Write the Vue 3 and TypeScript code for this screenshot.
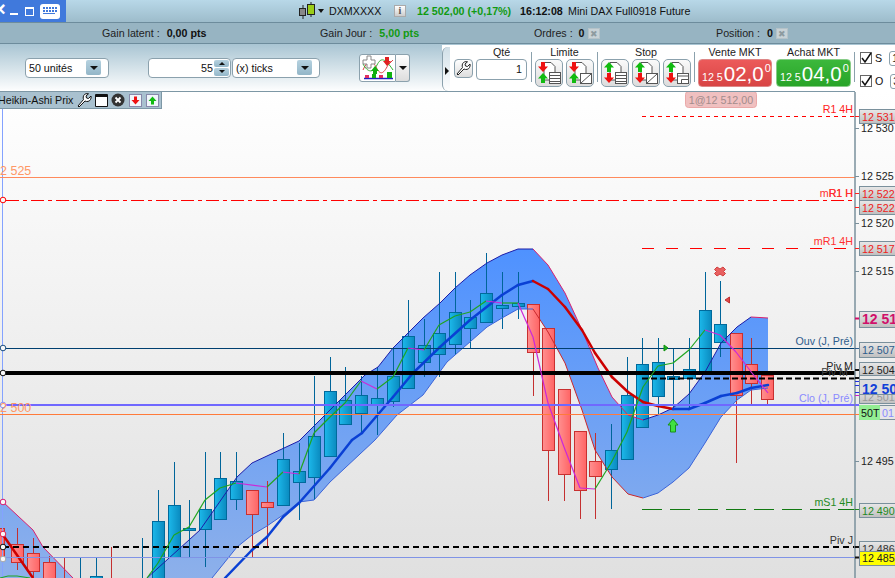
<script setup lang="ts">
type P = [number, number]
type C = { x: number; t: number; b: number; h: number; l: number; up: boolean }

const c = (x: number, t: number, b: number, h: number, l: number, up = true): C => ({ x, t, b, h, l, up })

const candles: C[] = [
  c(-2, 528, 559, 520, 565, false), c(17.5, 544, 562, 528, 570, false), c(33, 553, 571, 538, 578, false),
  c(49, 562, 590, 556, 600, false), c(64, 600, 610, 557, 620, false), c(80, 600, 610, 557, 620),
  c(96, 576, 600, 557, 620), c(111, 600, 610, 547, 620, false), c(142, 600, 610, 538, 620),
  c(158, 521, 600, 490, 620), c(174, 505, 557, 462, 557), c(189, 528, 530, 500, 557),
  c(205, 509, 529, 452, 567), c(220, 478, 519, 452, 519), c(236, 481, 499, 452, 510),
  c(252, 490, 514, 490, 557, false), c(267, 502, 507, 481, 547, false), c(283, 459, 505, 433, 505),
  c(299, 471, 482, 443, 520), c(314, 436, 477, 376, 500), c(330, 391, 456, 357, 456),
  c(345.5, 400, 424, 367, 425), c(361, 395, 413, 376, 434), c(377, 398, 404, 367, 435),
  c(393, 376, 401, 348, 407), c(408, 336, 388, 300, 388), c(424, 345, 362, 319, 377),
  c(439, 333, 354, 272, 377), c(455, 312, 344, 272, 355), c(470, 317, 328, 300, 348),
  c(486, 293, 322, 253, 322), c(502, 305, 308, 272, 329), c(518, 303, 306, 272, 319),
  c(533, 304, 352, 304, 396, false), c(548.5, 328, 450, 328, 501, false), c(564.5, 389, 474, 389, 501, false),
  c(580.5, 431, 490, 431, 519, false), c(595.5, 461, 476, 433, 519, false), c(611, 450, 469, 424, 509),
  c(627, 395, 459, 357, 459), c(642, 364, 427, 338, 427), c(658, 362, 396, 338, 414),
  c(673.5, 376, 379, 348, 410), c(689.5, 369, 378, 338, 410), c(705.5, 310, 374, 272, 374),
  c(720.5, 324, 342, 281, 357), c(736, 333, 395, 333, 463, false), c(751.5, 364, 383, 338, 404, false),
  c(767.5, 375, 399, 375, 404, false)
]

const upper: P[] = [[147, 578], [200, 530], [237, 477], [252, 463], [299, 441], [313, 427], [330, 410], [365, 375], [378, 367], [393, 348], [408, 333], [423, 318], [440, 303], [455, 288], [470, 275], [487, 263], [502, 255], [518, 249], [533, 249], [548, 265], [565, 293], [582, 330], [598, 368], [612, 397], [628, 415], [643, 420], [658, 415], [673, 408], [689, 394], [705, 372], [721, 343], [737, 327], [751, 317], [768, 318]]
const lower: P[] = [[212, 578], [237, 547], [252, 535], [267, 526], [283, 515], [299, 502], [314, 500], [330, 482], [375, 440], [397, 415], [423, 395], [447, 362], [487, 327], [502, 318], [518, 309], [533, 309], [548, 332], [565, 363], [582, 410], [595, 450], [612, 477], [628, 494], [643, 498], [658, 493], [673, 482], [689, 468], [705, 443], [721, 417], [737, 400], [751, 390], [768, 388]]
const mid: P[] = [[225, 578], [252, 550], [267, 537], [283, 517], [299, 503], [330, 468], [352, 440], [362, 433], [393, 397], [413, 373], [440, 347], [470, 320], [502, 295], [518, 285], [533, 281], [548, 289], [565, 307], [582, 330], [595, 353], [612, 377], [628, 392], [643, 402], [658, 406], [673, 409], [689, 409], [705, 403], [721, 396], [737, 393], [751, 388], [768, 385]]
const thin: P[] = [[147, 578], [158, 563], [174, 535], [189, 527], [205, 500], [220, 488], [236, 483], [267, 487], [283, 472], [299, 474], [314, 433], [330, 417], [345, 403], [361, 381], [377, 389], [393, 377], [408, 348], [424, 350], [439, 325], [455, 316], [470, 312], [486, 301], [502, 303], [518, 303], [533, 337], [548, 403], [564, 447], [580, 488], [595, 489], [611, 463], [627, 432], [643, 387], [658, 366], [673, 363], [689, 350], [705, 330], [720, 335], [736, 352], [752, 373], [768, 393]]
const leftUpper: P[] = [[3, 502], [33, 530], [43, 547], [73, 578]]
const leftThin: P[] = [[0, 578], [8, 576], [17, 576], [30, 578]]

const pts = (a: P[]) => a.map((p) => p.join(',')).join(' ')
const bandPath = pts([...upper, ...[...lower].reverse()])
const leftBand = pts([[0, 500], ...leftUpper, [0, 578]])

type Seg = { d: string; up: boolean }
const segs = (a: P[]): Seg[] => {
  const out: Seg[] = []
  for (let i = 1; i < a.length; i++) {
    out.push({ d: `M${a[i - 1][0]} ${a[i - 1][1]}L${a[i][0]} ${a[i][1]}`, up: a[i][1] <= a[i - 1][1] })
  }
  return out
}
const upperSegs = segs(upper)
const lowerSegs = segs(lower)
const midSegs = segs(mid)
const thinSegs = segs(thin)

const hLines = [
  { y: 116.5, x: 642, c: '#ff0000', w: 1, d: '4 4' },
  { y: 177.5, x: 0, c: '#ff8a5c', w: 1, d: '' },
  { y: 200.5, x: 6, c: '#ff0000', w: 1, d: '13 4 4 4' },
  { y: 248.5, x: 642, c: '#ff0000', w: 1, d: '12 12' },
  { y: 348.5, x: 0, c: '#003f70', w: 1, d: '' },
  { y: 373, x: 0, c: '#000000', w: 4, d: '' },
  { y: 378.5, x: 642, c: '#000000', w: 2, d: '6 3' },
  { y: 405, x: 0, c: '#7068ff', w: 2, d: '' },
  { y: 414.5, x: 0, c: '#ff7a3a', w: 1, d: '' },
  { y: 509.5, x: 642, c: '#127a12', w: 1, d: '20 8' },
  { y: 547, x: 3, c: '#000000', w: 2, d: '6 4' },
  { y: 557.5, x: 0, c: '#7f93e6', w: 1, d: '' }
]
const dots = [
  { y: 200, c: '#ff0000' }, { y: 348, c: '#1c4f80' }, { y: 373, c: '#111111' }, { y: 405, c: '#8c8cf0' },
  { y: 502, c: '#d81b70' }, { y: 534, c: '#e02050' }, { y: 547, c: '#111111' }, { y: 559, c: '#a8a8a8' }
]
const lineLabels = [
  { t: 'R1 4H', y: 113, c: '#ff2020' }, { t: 'mR1 H', y: 197, c: '#ff3030' }, { t: 'R1 H', y: 197, c: '#ff3030' },
  { t: 'mR1 4H', y: 245, c: '#ff3030' }, { t: 'Ouv (J, Pré)', y: 345, c: '#2e5c8c' }, { t: 'Piv M', y: 370, c: '#222222' },
  { t: 'Piv M', y: 376, c: '#444444', x: 848 }, { t: 'Clo (J, Pré)', y: 402, c: '#8a8aff' },
  { t: 'mS1 4H', y: 506, c: '#1f8a1f' }, { t: 'Piv J', y: 544, c: '#333333' }
]
const ticks = [
  { t: '12 530', y: 128 }, { t: '12 525', y: 176 }, { t: '12 520', y: 223 }, { t: '12 515', y: 271 }, { t: '12 495', y: 461 }
]
const boxes = [
  { t: '12 531', y: 109, h: 14, c: '#ee2020' }, { t: '12 522', y: 186, h: 14, c: '#ee2020' },
  { t: '12 522', y: 200, h: 14, c: '#ee2020' }, { t: '12 517', y: 241, h: 14, c: '#ee2020' },
  { t: '12 507', y: 342, h: 15, c: '#2e5c8c' }, { t: '12 504', y: 362, h: 14, c: '#222222' },
  { t: '12 501', y: 389, h: 14, c: '#999999' }, { t: '12 490', y: 503, h: 14, c: '#1f8a1f' },
  { t: '12 486', y: 541, h: 14, c: '#333333' }
]

const limits = [
  { first: 'down', shape: 'list' }, { first: 'down', shape: 'diag' }
]
const stops = [
  { first: 'up', shape: 'list' }, { first: 'up', shape: 'diag' }, { first: 'up', shape: 'win' }
]
const arrowUp = 'M5 0L10 5.500H7V10H3V5.500H0Z'
const arrowDown = 'M3 0H7V4.500H10L5 10L0 4.500H3Z'
</script>

<template>
  <div class="app">
    <header class="top">
      <div class="winbtns">
        <span class="wx">×</span>
        <span class="wmin"></span>
        <span class="wmax"></span>
        <span class="kbd"><i v-for="n in 10" :key="n"></i><b></b></span>
      </div>
      <svg class="candleico" width="20" height="18" viewBox="0 0 20 18">
        <path d="M5 3V17M13 0V15" stroke="#222" fill="none" />
        <rect x="1.500" y="6.500" width="6" height="7" fill="#888" stroke="#222" />
        <rect x="9.500" y="2.500" width="7" height="10" fill="#9acd18" stroke="#222" />
      </svg>
      <span class="caret topcaret"></span>
      <span class="sym">DXMXXXX</span>
      <span class="info">i</span>
      <span class="price">12 502,00 (+0,17%)</span>
      <span class="time">16:12:08</span>
      <span class="name">Mini DAX Full0918 Future</span>
    </header>

    <section class="stats">
      <div class="stat s1"><span>Gain latent :</span><b>0,00 pts</b></div>
      <div class="stat s2"><span>Gain Jour :</span><b class="green">5,00 pts</b></div>
      <div class="stat s3"><span>Ordres :</span><b>0</b><i class="xico">✖</i></div>
      <div class="stat s4"><span>Position :</span><b>0</b><i class="xico">✖</i></div>
    </section>

    <section class="tools">
      <div class="tleft">
        <div class="sel sel1"><span>50 unités</span><em><span class="caret"></span></em></div>
        <div class="numgroup">
          <div class="num">
            <span>55</span>
            <div class="spin"><em><span class="caret up"></span></em><em><span class="caret"></span></em></div>
          </div>
          <div class="sel sel2"><span>(x) ticks</span><em><span class="caret"></span></em></div>
        </div>
        <div class="stratbtn">
          <div class="strat">
            <svg width="34" height="25" viewBox="0 0 34 25">
              <path d="M2 15C7 4 11 4 15 12S22 20 27 10L32 5" stroke="#e04040" fill="none" />
              <path d="M2 9C7 18 12 18 16 10S24 3 32 15" stroke="#30b030" fill="none" />
              <path d="M3 23.500H32" stroke="#2020c0" stroke-width="1.500" />
              <path d="M4 20H8V23H4ZM18 20H22V23H18Z" fill="#e03060" />
              <path d="M11 19H15V23H11ZM26 17H31V23H26Z" fill="#10b010" />
              <path d="M2 5H6V1H10V5H14V9H10V13H6V9H2Z" fill="#fff" stroke="#888" />
              <path d="M14 11L18 16H16V19H12V16H10Z" fill="#10b010" />
              <path d="M24 2H28V6H30L26 11L22 6H24Z" fill="#e02020" />
            </svg>
          </div>
          <div class="stratdrop"><span class="caret"></span></div>
        </div>
      </div>

      <div class="panel">
        <span class="handle"><span class="harrow"></span></span>
        <div class="grp">
          <label class="qlabel">Qté</label>
          <div class="qrow">
            <span class="wrench">
              <svg width="15" height="15" viewBox="0 0 15 15"><path d="M1 13L2 14L8 8C10 9 12.500 8.500 13.500 6.500S14 3 14 3L11.500 5.500L9.500 5L9 3L11.500 .8S9 .2 7.500 1.500S6 5 6.500 6.500Z" fill="#fff" stroke="#222" /></svg>
            </span>
            <span class="qty">1</span>
          </div>
        </div>
        <span class="sep first"></span>
        <div class="grp">
          <label>Limite</label>
          <div class="btns">
            <button v-for="b in limits" :key="b.shape" class="tbtn">
              <svg width="26" height="26" viewBox="0 0 26 26">
                <path d="M8 2.500H15L19 6.500V20H8Z" fill="#fff" stroke="#555" />
                <path :d="arrowDown" fill="#ee1111" transform="translate(2 2)" />
                <path :d="arrowUp" fill="#11bb11" transform="translate(2 13)" />
                <g v-if="b.shape === 'list'"><rect x="13.500" y="12.500" width="11" height="11" fill="#fff" stroke="#555" /><path d="M14 15.500H24M14 18.500H24M14 21.500H24" stroke="#555" /></g>
                <g v-else><rect x="13.500" y="13.500" width="11" height="10" fill="#fff" stroke="#555" /><path d="M14 23L24 14" stroke="#555" /></g>
              </svg>
            </button>
          </div>
        </div>
        <span class="sep"></span>
        <div class="grp">
          <label>Stop</label>
          <div class="btns">
            <button v-for="b in stops" :key="b.shape" class="tbtn">
              <svg width="26" height="26" viewBox="0 0 26 26">
                <path d="M8 2.500H15L19 6.500V20H8Z" fill="#fff" stroke="#555" />
                <path :d="arrowUp" fill="#11bb11" transform="translate(2 2)" />
                <path :d="arrowDown" fill="#ee1111" transform="translate(2 13)" />
                <g v-if="b.shape === 'list'"><rect x="13.500" y="12.500" width="11" height="11" fill="#fff" stroke="#555" /><path d="M14 15.500H24M14 18.500H24M14 21.500H24" stroke="#555" /></g>
                <g v-else-if="b.shape === 'diag'"><rect x="13.500" y="13.500" width="11" height="10" fill="#fff" stroke="#555" /><path d="M14 23L24 14" stroke="#555" /></g>
                <g v-else><rect x="13.500" y="13.500" width="11" height="10" fill="#fff" stroke="#555" /><path d="M14 16H24M17.500 23.500V19.500H24" stroke="#555" fill="none" /></g>
              </svg>
            </button>
          </div>
        </div>
        <span class="sep"></span>
        <div class="grp">
          <label>Vente MKT</label>
          <div class="mkt sell"><small>12 5</small><strong>02,0</strong><sup>0</sup></div>
        </div>
        <div class="grp achat">
          <label>Achat MKT</label>
          <div class="mkt buy"><small>12 5</small><strong>04,0</strong><sup>0</sup></div>
        </div>
        <span class="sep last"></span>
        <div class="checks">
          <div class="chk"><span class="box"><svg width="12" height="12" viewBox="0 0 12 12"><path d="M2 6L5 10L11 1" fill="none" stroke="#111" stroke-width="1.500" /></svg></span><span>S</span><span class="stub">1</span></div>
          <div class="chk"><span class="box"><svg width="12" height="12" viewBox="0 0 12 12"><path d="M2 6L5 10L11 1" fill="none" stroke="#111" stroke-width="1.500" /></svg></span><span>O</span><span class="stub">3</span></div>
        </div>
      </div>
    </section>

    <main class="chart">
      <svg class="plot" width="895" height="486" viewBox="0 92 895 486">
        <defs>
          <linearGradient id="band" x1="0" y1="250" x2="0" y2="578" gradientUnits="userSpaceOnUse">
            <stop offset="0" stop-color="#4f92ff" />
            <stop offset="1" stop-color="#8db0ea" />
          </linearGradient>
          <linearGradient id="blueBody" x1="0" x2="1" y1="0" y2="0">
            <stop offset="0" stop-color="#1cb8ea" />
            <stop offset="1" stop-color="#0a8abf" />
          </linearGradient>
          <linearGradient id="redBody" x1="0" x2="1" y1="0" y2="0">
            <stop offset="0" stop-color="#ff9090" />
            <stop offset="1" stop-color="#ff6464" />
          </linearGradient>
          <linearGradient id="boxBg" x1="0" x2="0" y1="0" y2="1">
            <stop offset="0" stop-color="#e8e8e8" />
            <stop offset="1" stop-color="#bfbfbf" />
          </linearGradient>
          <clipPath id="axisClip"><rect x="855" y="92" width="40" height="486" /></clipPath>
        </defs>

        <polygon :points="leftBand" fill="url(#band)" />
        <polygon :points="bandPath" fill="url(#band)" />

        <g v-for="k in candles" :key="k.x">
          <path :d="`M${Math.floor(k.x) + 0.5} ${k.h}V${k.l}`" :stroke="k.up ? '#00659a' : '#c43030'" shape-rendering="crispEdges" />
          <rect :x="Math.floor(k.x) - 5.5" :y="k.t + 0.5" width="12" :height="k.b - k.t" :fill="k.up ? 'url(#blueBody)' : 'url(#redBody)'" :stroke="k.up ? '#006a9c' : '#c83030'" />
        </g>

        <path v-for="(s, i) in upperSegs" :key="'u' + i" :d="s.d" :stroke="s.up ? '#1c1ca8' : '#d8206e'" fill="none" />
        <path v-for="(s, i) in lowerSegs" :key="'l' + i" :d="s.d" :stroke="s.up ? '#3c64d8' : '#c8282e'" fill="none" />
        <polyline :points="pts(leftUpper)" stroke="#d8206e" fill="none" />

        <path v-for="(s, i) in midSegs" :key="'m' + i" :d="s.d" :stroke="s.up ? '#0a40d4' : '#cc0000'" stroke-width="2.500" fill="none" stroke-linecap="round" />
        <path d="M3 535L33 578" stroke="#cc0000" stroke-width="2.500" fill="none" />

        <path d="M2.500 92V578" stroke="#84a2ff" />
        <path v-for="l in hLines" :key="l.y" :d="`M${l.x} ${l.y}H855`" :stroke="l.c" :stroke-width="l.w" :stroke-dasharray="l.d" fill="none" />

        <path v-for="(s, i) in thinSegs" :key="'t' + i" :d="s.d" :stroke="s.up ? '#1ea51e' : '#cc28d8'" stroke-width="1.200" fill="none" />
        <polyline :points="pts(leftThin)" stroke="#1ea51e" fill="none" />

        <circle v-for="d in dots" :key="d.y" cx="3" :cy="d.y" r="2.800" fill="#f8f8f8" :stroke="d.c" />

        <text class="lefttxt" x="0" y="174.500">2 525</text>
        <text class="lefttxt" x="0" y="411.500">2 500</text>

        <path d="M717 267L720 269L723 267L725.500 269.500L723.500 271.500L725.500 273.500L723 276L720 274L717 276L714.500 273.500L716.500 271.500L714.500 269.500Z" fill="#e86060" stroke="#d04040" />
        <path d="M729.500 297V303L725 300Z" fill="#e04848" stroke="#c03030" />
        <path d="M664 345V351L668 348Z" fill="#20b020" stroke="#109010" />
        <path d="M673 419L678 425H675.500V432H670.500V425H668Z" fill="#40e040" stroke="#189018" />

        <text v-for="(l, i) in lineLabels" :key="'lab' + i" class="lbl" :x="l.x ?? 853" :y="l.y" text-anchor="end" :fill="l.c">{{ l.t }}</text>

        <rect x="685.500" y="91.500" width="71" height="16" rx="3" fill="#f0c0c0" stroke="#eaa8a8" />
        <text class="lbl" x="721" y="104" text-anchor="middle" fill="#a38c8c">1@12 512,00</text>

        <path d="M855 92V578" stroke="#7a909c" stroke-width="1.500" />

        <g v-for="t in ticks" :key="t.t">
          <path :d="`M855 ${t.y + 0.5}H859`" stroke="#7a909c" />
          <text class="lbl" x="861" :y="t.y + 4" fill="#222">{{ t.t }}</text>
        </g>

        <g clip-path="url(#axisClip)">
          <path d="M855 116.500H859M855 193.500H859M855 207.500H859M855 248.500H859" stroke="#ff2020" />
          <path d="M855 318.500H859" stroke="#d0106a" stroke-width="2" />
          <path d="M855 348.500H859" stroke="#2e5c8c" />
          <path d="M855 370H859M855 378H859M855 547H859" stroke="#111" stroke-width="2" />
          <path d="M855 381.500H859M855 385.500H859M855 392.500H859" stroke="#2030e0" />
          <path d="M855 395.500H859" stroke="#cc20c8" />
          <path d="M855 405H859" stroke="#7068ff" stroke-width="2" />
          <path d="M855 414.500H859" stroke="#ff7a3a" />
          <path d="M855 509.500H859" stroke="#1f8a1f" />
          <g v-for="b in boxes" :key="b.t + b.y">
            <rect x="859.500" :y="b.y + 0.5" width="40" :height="b.h" fill="url(#boxBg)" stroke="#7a909c" />
            <text class="lbl" x="862" :y="b.y + 11.5" :fill="b.c">{{ b.t }}</text>
          </g>

          <rect x="859.500" y="311.500" width="40" height="16" fill="url(#boxBg)" stroke="#7a909c" />
          <text class="big" x="862" y="324" fill="#d0106a">12 51</text>

          <rect x="859.500" y="375.500" width="40" height="5" fill="#e8e8e8" stroke="#7a909c" />
          <rect x="859.500" y="379.500" width="40" height="15" fill="#dcdcdc" stroke="#7a909c" />
          <text class="big" x="862" y="393.500" fill="#1140d8">12 50</text>

          <rect x="859.500" y="405.500" width="40" height="14" fill="#e6e6e6" stroke="#7a909c" />
          <rect x="859" y="405" width="21" height="15" rx="1" fill="#93ee93" />
          <text class="lbl" x="861" y="417" fill="#111">50T</text>
          <text class="lbl" x="882" y="417" fill="#8a8aff">01</text>

          <rect x="859.500" y="551.500" width="40" height="14" fill="#ffff00" stroke="#7a909c" />
          <text class="lbl" x="862" y="562" fill="#222">12 485</text>
          <path d="M855 557.500H859" stroke="#111" stroke-width="2" />
        </g>
      </svg>

      <div class="legend">
        <span class="legtxt">Heikin-Ashi Prix</span>
        <svg class="legico" width="15" height="15" viewBox="0 0 15 15"><path d="M1 13L2 14L8 8C10 9 12.500 8.500 13.500 6.500S14 3 14 3L11.500 5.500L9.500 5L9 3L11.500 .8S9 .2 7.500 1.500S6 5 6.500 6.500Z" fill="#fff" stroke="#111" /></svg>
        <span class="legwin"></span>
        <svg class="legico" width="14" height="14" viewBox="0 0 14 14"><circle cx="7" cy="7" r="6.500" fill="#333" /><path d="M4.500 4.500L9.500 9.500M9.500 4.500L4.500 9.500" stroke="#fff" stroke-width="1.800" /></svg>
        <svg class="legdoc" width="13" height="13" viewBox="0 0 13 13"><rect x=".5" y=".5" width="12" height="12" fill="#f0f6fa" stroke="#88a" /><path d="M5 2.500H8V6H10.500L6.500 10.500L2.500 6H5Z" fill="#ee1111" /></svg>
        <svg class="legdoc" width="13" height="13" viewBox="0 0 13 13"><rect x=".5" y=".5" width="12" height="12" fill="#f0f6fa" stroke="#88a" /><path d="M6.500 2.500L10.500 7H8V10.500H5V7H2.500Z" fill="#11bb11" /></svg>
      </div>
    </main>
  </div>
</template>

<style>
html, body { margin: 0; background: #fff; }
</style>

<style scoped>
.app {
  width: 895px;
  height: 578px;
  overflow: hidden;
  display: flex;
  flex-direction: column;
  font-family: "Liberation Sans", Arial, sans-serif;
  font-size: 10.700px;
  color: #111;
}
.top {
  height: 23px;
  box-sizing: border-box;
  flex: none;
  display: flex;
  align-items: center;
  background: linear-gradient(#b8d8e8, #9dbccb);
  border-bottom: 1px solid #6d8c9c;
}
.winbtns {
  width: 66px;
  height: 22px;
  flex: none;
  background: #4079dc;
  position: relative;
  display: flex;
  align-items: center;
  overflow: hidden;
}
.wx { position: absolute; left: -6px; top: -2px; color: #fff; font-size: 20px; font-weight: bold; }
.wmin { position: absolute; left: 10px; top: 13px; width: 8px; height: 2px; background: #fff; }
.wmax { position: absolute; left: 25px; top: 7px; width: 7px; height: 6px; border: 1px solid #fff; border-top-width: 2px; }
.kbd {
  position: absolute;
  left: 40px;
  top: 4px;
  width: 20px;
  height: 15px;
  background: #fff;
  border-radius: 3px;
  display: grid;
  grid-template-columns: repeat(5, 2px);
  gap: 1px;
  padding: 3px 2px 0 3px;
  box-sizing: border-box;
  align-content: start;
}
.kbd i { width: 2px; height: 2px; background: #4079dc; display: block; }
.kbd b { grid-column: 1 / 6; height: 1px; background: #4079dc; width: 12px; }
.candleico { margin-left: 232px; flex: none; }
.caret {
  display: inline-block;
  width: 0;
  height: 0;
  border-left: 4px solid transparent;
  border-right: 4px solid transparent;
  border-top: 4px solid #111;
}
.caret.up { border-top: none; border-bottom: 4px solid #111; }
.topcaret { margin-left: 0; border-left-width: 3px; border-right-width: 3px; }
.sym { margin-left: 5px; width: 65px; flex: none; }
.info {
  width: 10px;
  height: 10px;
  flex: none;
  background: linear-gradient(#fff, #ccc);
  border: 1px solid #aaa;
  text-align: center;
  line-height: 10px;
  font-size: 10px;
  font-weight: bold;
  color: #555;
  font-family: "Liberation Serif", serif;
}
.price { margin-left: 11px; width: 103px; flex: none; color: #119a11; font-weight: bold; white-space: nowrap; }
.time { font-weight: bold; width: 48px; flex: none; }
.name { white-space: nowrap; }
.stats {
  height: 21px;
  box-sizing: border-box;
  flex: none;
  display: flex;
  align-items: center;
  padding-left: 102px;
  background: #97b4c2;
  border-bottom: 1px solid #6d8c9c;
  color: #222;
}
.stat { display: flex; align-items: center; flex: none; white-space: nowrap; }
.stat b { margin-left: 7px; color: #111; }
.stat b.green { color: #119a11; }
.s1 { width: 218px; }
.s2 { width: 214px; }
.s3 { width: 182px; }
.s3 b { margin-left: 6px; }
.xico {
  width: 12px;
  height: 11px;
  margin-left: 3px;
  background: #c8d2d6;
  color: #8e9ba0;
  font-style: normal;
  font-size: 9px;
  line-height: 11px;
  text-align: center;
  border: 1px solid #b5c2c8;
  box-sizing: border-box;
}
.tools {
  height: 48px;
  flex: none;
  display: flex;
  background: linear-gradient(#a9c5d3, #ffffff);
}
.tleft {
  width: 442px;
  flex: none;
  position: relative;
  display: flex;
  align-items: center;
  padding: 0 0 0 25px;
  box-sizing: border-box;
  border-bottom: 1px solid #7d97a5;
}
.sel {
  height: 20px;
  box-sizing: border-box;
  background: #fff;
  border: 1px solid #8ba1ad;
  border-radius: 4px;
  display: flex;
  align-items: center;
  justify-content: space-between;
  padding: 0 7px 0 3px;
  flex: none;
}
.sel em, .spin em {
  display: flex;
  align-items: center;
  justify-content: center;
  background: linear-gradient(#b6d2e0, #93b6c8);
  border-radius: 2px;
}
.sel em { width: 15px; height: 15px; }
.sel1 { width: 84px; }
.sel2 { width: 88px; margin-left: 1px; }
.numgroup { display: flex; margin-left: 39px; flex: none; }
.num {
  width: 83px;
  height: 20px;
  box-sizing: border-box;
  background: #fff;
  border: 1px solid #8ba1ad;
  border-radius: 4px;
  display: flex;
  align-items: center;
  justify-content: flex-end;
}
.spin { display: flex; flex-direction: column; gap: 1px; margin: 0 1px 0 1px; }
.spin em { width: 15px; height: 7.500px; }
.spin .caret { border-left-width: 3px; border-right-width: 3px; border-top-width: 3px; }
.spin .caret.up { border-bottom-width: 3px; border-top: none; }
.stratbtn { display: flex; margin-left: 39px; flex: none; }
.strat {
  width: 35px;
  height: 26px;
  background: #fff;
  border: 1px solid #8ba1ad;
  border-radius: 3px 0 0 3px;
  display: flex;
  align-items: center;
  justify-content: center;
}
.stratdrop {
  width: 13px;
  height: 26px;
  background: linear-gradient(#fff, #ddd);
  border: 1px solid #8ba1ad;
  border-left: none;
  border-radius: 0 3px 3px 0;
  display: flex;
  align-items: center;
  justify-content: center;
}
.panel {
  flex: 1;
  background: #fff;
  display: flex;
  position: relative;
  padding-left: 12px;
  border-top: 1px solid #a9c5d3;
  box-sizing: border-box;
}
.panel::after {
  content: "";
  position: absolute;
  left: 0;
  bottom: 0;
  width: 413px;
  height: 1px;
  background: #7d97a5;
}
.handle {
  position: absolute;
  left: 0;
  top: 2px;
  width: 7px;
  height: 44px;
  background: linear-gradient(#d0dfe7, #fff);
  border-left: 1px solid #8ba1ad;
  border-radius: 6px 0 0 6px;
}
.harrow {
  position: absolute;
  left: 2px;
  top: 20px;
  width: 0;
  height: 0;
  border-top: 4px solid transparent;
  border-bottom: 4px solid transparent;
  border-left: 4px solid #111;
}
.grp { display: flex; flex-direction: column; align-items: center; flex: none; }
.grp label { height: 14px; line-height: 14px; color: #222; white-space: nowrap; }
.grp .qlabel { padding-left: 22px; }
.qrow { display: flex; gap: 3px; }
.wrench {
  width: 19px;
  height: 19px;
  box-sizing: border-box;
  border: 1px solid #8ba1ad;
  border-radius: 4px;
  background: linear-gradient(#fff, #ddd);
  display: flex;
  align-items: center;
  justify-content: center;
}
.qty {
  width: 51px;
  height: 21px;
  box-sizing: border-box;
  border: 1px solid #8ba1ad;
  border-radius: 4px;
  background: #fff;
  text-align: right;
  padding-right: 4px;
  line-height: 19px;
}
.sep { width: 1px; height: 30px; background: #8ba1ad; margin: 7px 3px 0 3px; flex: none; }
.sep.first { margin-left: 4px; }
.sep.last { margin: 7px 0 0 3px; }
.btns { display: flex; gap: 3px; }
.tbtn {
  width: 28px;
  height: 28px;
  padding: 0;
  box-sizing: border-box;
  border: 1px solid #8ba1ad;
  border-radius: 5px;
  background: linear-gradient(#fafafa, #dcdcdc);
  display: flex;
  align-items: center;
  justify-content: center;
}
.mkt {
  width: 74px;
  height: 28px;
  box-sizing: border-box;
  border-radius: 4px;
  color: #fff;
  display: flex;
  align-items: baseline;
  padding: 1px 0 0 3px;
  white-space: nowrap;
  overflow: hidden;
}
.mkt small { font-size: 10.700px; margin-right: 1px; }
.mkt strong { font-weight: normal; font-size: 20.500px; line-height: 26px; }
.mkt sup { font-size: 11px; line-height: 11px; vertical-align: baseline; position: relative; top: -9px; margin-left: 1px; }
.sell { background: linear-gradient(#ec5a5a, #d84444); border: 1px solid #d88; }
.buy { background: linear-gradient(#3cb83c, #28a428); border: 1px solid #8c8; width: 75px; }
.achat { margin-left: 4px; }
.checks { margin-left: 5px; display: flex; flex-direction: column; gap: 11px; padding-top: 7px; flex: none; width: 36px; overflow: hidden; }
.chk { display: flex; align-items: center; gap: 3px; height: 12px; }
.box { width: 12px; height: 12px; box-sizing: border-box; border: 1px solid #666; background: #fff; display: block; flex: none; line-height: 0; }
.box svg { margin: -1px; }
.stub {
  margin-left: 4px;
  width: 20px;
  height: 15px;
  flex: none;
  box-sizing: border-box;
  border: 1px solid #8ba1ad;
  border-radius: 3px;
  padding-left: 2px;
  line-height: 13px;
}
.chart {
  flex: 1;
  position: relative;
  background: linear-gradient(#ffffff, #e0e0e0);
  overflow: hidden;
  min-height: 0;
}
.plot { display: block; }
.lbl { font-size: 10.700px; font-family: "Liberation Sans", Arial, sans-serif; }
.big { font-size: 14px; font-weight: bold; font-family: "Liberation Sans", Arial, sans-serif; }
.lefttxt { font-size: 12.500px; fill: #ff9866; font-family: "Liberation Sans", Arial, sans-serif; }
.legend {
  position: absolute;
  left: 0;
  top: 0;
  width: 162px;
  height: 17px;
  box-sizing: border-box;
  background: #a9c1cf;
  border-right: 1px solid #7d97a5;
  border-bottom: 1px solid #7d97a5;
  display: flex;
  align-items: center;
  gap: 3px;
  overflow: hidden;
  white-space: nowrap;
}
.legtxt { margin-left: -2px; margin-right: 1px; color: #111; flex: none; }
.legico { flex: none; }
.legwin {
  width: 11px;
  height: 9px;
  background: #fff;
  border: 1px solid #111;
  border-top-width: 3px;
  border-radius: 1px;
  flex: none;
}
.legdoc { margin-left: 1px; flex: none; }
</style>
